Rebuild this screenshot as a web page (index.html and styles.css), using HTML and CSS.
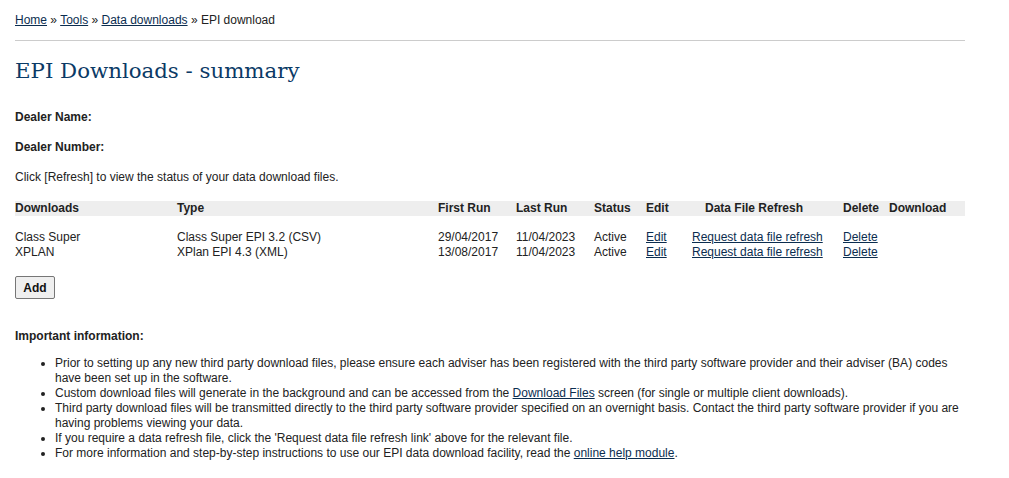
FILE: index.html
```html
<!DOCTYPE html>
<html>
<head>
<meta charset="utf-8">
<link rel="stylesheet" href="styles.css">
</head>
<body>
<div class="page">
  <div class="crumbs"><a href="#">Home</a> » <a href="#">Tools</a> » <a href="#">Data downloads</a> » EPI download</div>
  <h1 class="title">EPI Downloads - summary</h1>
  <p class="label">Dealer Name:</p>
  <p class="label">Dealer Number:</p>
  <p class="note">Click [Refresh] to view the status of your data download files.</p>
  <table class="grid">
    <colgroup>
      <col class="c1"><col class="c2"><col class="c3"><col class="c4"><col class="c5"><col class="c6"><col class="c7"><col class="c8"><col class="c9">
    </colgroup>
    <thead>
      <tr class="head">
        <th>Downloads</th><th>Type</th><th>First Run</th><th>Last Run</th><th>Status</th><th>Edit</th><th class="center">Data File Refresh</th><th>Delete</th><th>Download</th>
      </tr>
    </thead>
    <tbody>
      <tr class="spacer"><td colspan="9"></td></tr>
      <tr>
        <td>Class Super</td><td>Class Super EPI 3.2 (CSV)</td><td>29/04/2017</td><td>11/04/2023</td><td>Active</td><td><a href="#">Edit</a></td><td class="refresh"><a href="#">Request data file refresh</a></td><td><a href="#">Delete</a></td><td></td>
      </tr>
      <tr>
        <td>XPLAN</td><td>XPlan EPI 4.3 (XML)</td><td>13/08/2017</td><td>11/04/2023</td><td>Active</td><td><a href="#">Edit</a></td><td class="refresh"><a href="#">Request data file refresh</a></td><td><a href="#">Delete</a></td><td></td>
      </tr>
    </tbody>
  </table>
  <button class="add" type="button">Add</button>
  <p class="label info">Important information:</p>
  <ul class="bullets">
    <li>Prior to setting up any new third party download files, please ensure each adviser has been registered with the third party software provider and their adviser (BA) codes have been set up in the software.</li>
    <li>Custom download files will generate in the background and can be accessed from the <a href="#">Download Files</a> screen (for single or multiple client downloads).</li>
    <li>Third party download files will be transmitted directly to the third party software provider specified on an overnight basis. Contact the third party software provider if you are having problems viewing your data.</li>
    <li>If you require a data refresh file, click the 'Request data file refresh link' above for the relevant file.</li>
    <li>For more information and step-by-step instructions to use our EPI data download facility, read the <a href="#">online help module</a>.</li>
  </ul>
</div>
</body>
</html>
```

FILE: styles.css
```css
html, body {
  margin: 0;
  padding: 0;
  background: #fff;
}
body {
  font-family: "Liberation Sans", Arial, sans-serif;
  font-size: 12px;
  line-height: 15px;
  color: #222;
}
a {
  color: #0b2d4f;
  text-decoration: underline;
}
.page {
  width: 950px;
  padding: 13px 15px 0 15px;
}
.crumbs {
  padding-bottom: 12px;
  border-bottom: 1px solid #ccc;
}
.title {
  font-family: "DejaVu Serif", Georgia, serif;
  font-weight: normal;
  font-size: 21.3px;
  line-height: 30px;
  color: #0b3a66;
  margin: 15px 0 0 0;
}
.label {
  font-weight: bold;
  margin: 0;
}
.title + .label {
  margin-top: 24px;
}
.label + .label {
  margin-top: 15px;
}
.note {
  margin: 15px 0 0 0;
}
.grid {
  margin-top: 16px;
  width: 950px;
  table-layout: fixed;
  border-collapse: collapse;
}
.c1 { width: 162px; }
.c2 { width: 261px; }
.c3 { width: 78px; }
.c4 { width: 78px; }
.c5 { width: 52px; }
.c6 { width: 44px; }
.c7 { width: 153px; }
.c8 { width: 46px; }
.c9 { width: 76px; }
.grid th, .grid td {
  padding: 0;
  text-align: left;
  white-space: nowrap;
  line-height: 15px;
  vertical-align: top;
}
.head th {
  background: #eee;
  font-weight: bold;
  height: 15px;
}
.head th.center {
  text-align: center;
  padding-right: 25px;
}
.spacer td {
  height: 14px;
}
.refresh {
  padding-left: 2px !important;
}
.add {
  margin-top: 16px;
  font-family: "Liberation Sans", Arial, sans-serif;
  font-size: 12px;
  font-weight: bold;
  color: #111;
  background: #efefef;
  border: 1px solid #767676;
  border-radius: 2px;
  padding: 3px 6px;
  height: 23px;
  width: 40px;
}
.label.info {
  margin-top: 30px;
}
.bullets {
  margin: 12px 0 0 0;
  padding-left: 40px;
  padding-right: 4px;
}
```
